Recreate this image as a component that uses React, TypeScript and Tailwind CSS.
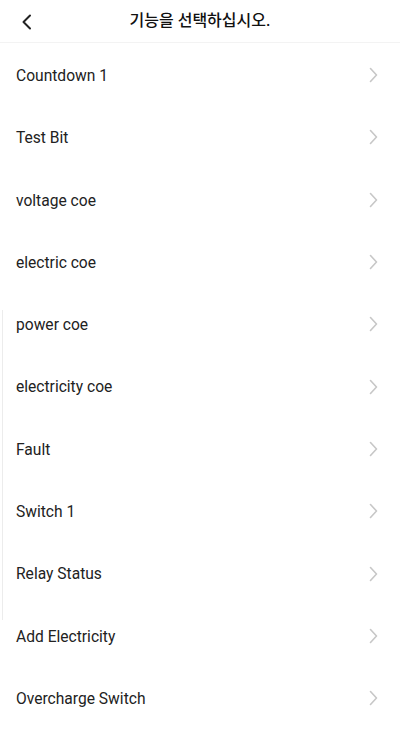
import React from "react";

const items = [
  "Countdown 1",
  "Test Bit",
  "voltage coe",
  "electric coe",
  "power coe",
  "electricity coe",
  "Fault",
  "Switch 1",
  "Relay Status",
  "Add Electricity",
  "Overcharge Switch",
];

const App: React.FC = () => {
  return (
    <div
      className="relative w-[400px] h-[752px] bg-white overflow-hidden"
      style={{ fontFamily: "Roboto, 'Noto Sans CJK KR', sans-serif" }}
    >
      <div className="relative flex items-center justify-center h-[43px] border-b border-[#f3f3f3]">
        <svg
          className="absolute left-[21px] top-[14px]"
          width="12"
          height="16"
          viewBox="0 0 12 16"
          fill="none"
        >
          <path d="M9 1.5 L2.5 8 L9 14.5" stroke="#222" strokeWidth="2" strokeLinecap="round" strokeLinejoin="round" />
        </svg>
        <span className="text-[16px] font-medium text-[#111] mt-[-1px]">기능을 선택하십시오.</span>
      </div>
      <div className="absolute left-[2px] top-[310px] w-px h-[310px] bg-[#ececec]" />
      <div className="flex flex-col pt-[1px]">
        {items.map((item) => (
          <div key={item} className="flex items-center justify-between h-[62.3px] pl-4 pr-[22px]">
            <span className="text-[15.6px] text-[#222] mt-[3px]">{item}</span>
            <svg width="9" height="16" viewBox="0 0 9 16" fill="none">
              <path d="M1.5 1.5 L7.5 8 L1.5 14.5" stroke="#c7c7c7" strokeWidth="1.6" strokeLinecap="round" strokeLinejoin="round" />
            </svg>
          </div>
        ))}
      </div>
    </div>
  );
};

export default App;
